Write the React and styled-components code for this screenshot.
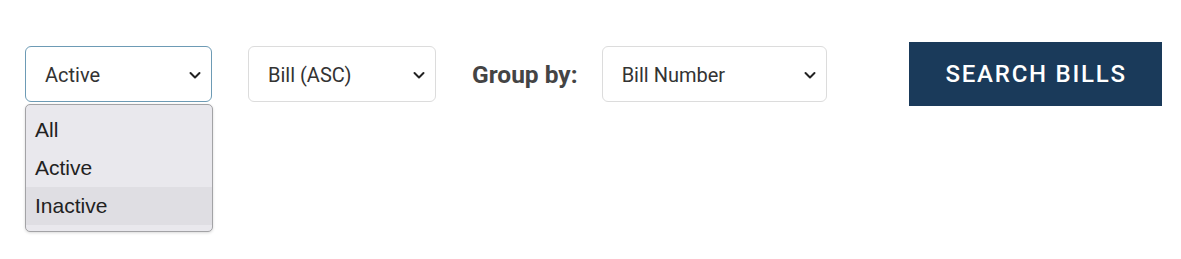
import React from "react";
import styled, { createGlobalStyle } from "styled-components";

const Global = createGlobalStyle`
  html, body { margin: 0; padding: 0; background: #fff; }
  body { font-family: Roboto, "Liberation Sans", Arial, sans-serif; }
`;

const Page = styled.div`
  min-height: 259px;
  box-sizing: border-box;
  padding: 42px 0 0 25px;
`;

const Toolbar = styled.div`
  display: flex;
  align-items: center;
  height: 64px;
`;

const SelectWrap = styled.div`
  position: relative;
  width: ${(p) => p.$w}px;
  margin-right: ${(p) => p.$mr}px;
  flex: none;
`;

const SelectBox = styled.div`
  box-sizing: border-box;
  height: 56px;
  display: flex;
  align-items: center;
  justify-content: space-between;
  padding: 1px 8px 0 19px;
  border: 1px solid ${(p) => (p.$focused ? "#6d9bb5" : "#dcdcdc")};
  border-radius: 6px;
  background: #fff;
  font-size: 20px;
  color: #333;
`;

const Chevron = styled.svg`
  width: 14px;
  height: 14px;
  flex: none;
  margin-right: 1px;
`;

const Menu = styled.ul`
  position: absolute;
  top: 58px;
  left: 0;
  z-index: 2;
  box-sizing: border-box;
  width: 188px;
  margin: 0;
  padding: 6px 0 6px;
  list-style: none;
  background: #e9e8ed;
  border: 1px solid #a3a3a6;
  border-radius: 5px;
  box-shadow: 0 1px 3px rgba(0, 0, 0, 0.15);
  font-family: "Liberation Sans", Arial, sans-serif;
  font-size: 21px;
  color: #222;
`;

const Option = styled.li`
  height: 38px;
  line-height: 38px;
  padding-left: 9px;
  background: ${(p) => (p.$hover ? "#dfdee3" : "transparent")};
`;

const Label = styled.span`
  font-family: Roboto, sans-serif;
  font-weight: 700;
  font-size: 24.5px;
  color: #444;
  margin-right: 24px;
  flex: none;
`;

const Button = styled.button`
  width: 253px;
  height: 64px;
  flex: none;
  border: none;
  border-radius: 0;
  background: #1a3a5a;
  color: #fff;
  font-family: Roboto, sans-serif;
  font-weight: 500;
  font-size: 24px;
  letter-spacing: 1.75px;
  padding: 0 0 0 2px;
  cursor: pointer;
`;

function Select({ value, width, mr, focused, options }) {
  return (
    <SelectWrap $w={width} $mr={mr}>
      <SelectBox $focused={focused}>
        <span>{value}</span>
        <Chevron viewBox="0 0 14 14">
          <path d="M2.5 5 L7 9.5 L11.5 5" fill="none" stroke="#222" strokeWidth="2" strokeLinecap="round" strokeLinejoin="round" />
        </Chevron>
      </SelectBox>
      {options && (
        <Menu>
          {options.map((o) => (
            <Option key={o} $hover={o === "Inactive"}>{o}</Option>
          ))}
        </Menu>
      )}
    </SelectWrap>
  );
}

export default function App() {
  return (
    <Page>
      <Global />
      <Toolbar>
        <Select value="Active" width={187} mr={36} focused options={["All", "Active", "Inactive"]} />
        <Select value="Bill (ASC)" width={188} mr={36} />
        <Label>Group by:</Label>
        <Select value="Bill Number" width={225} mr={82} />
        <Button>SEARCH BILLS</Button>
      </Toolbar>
    </Page>
  );
}
